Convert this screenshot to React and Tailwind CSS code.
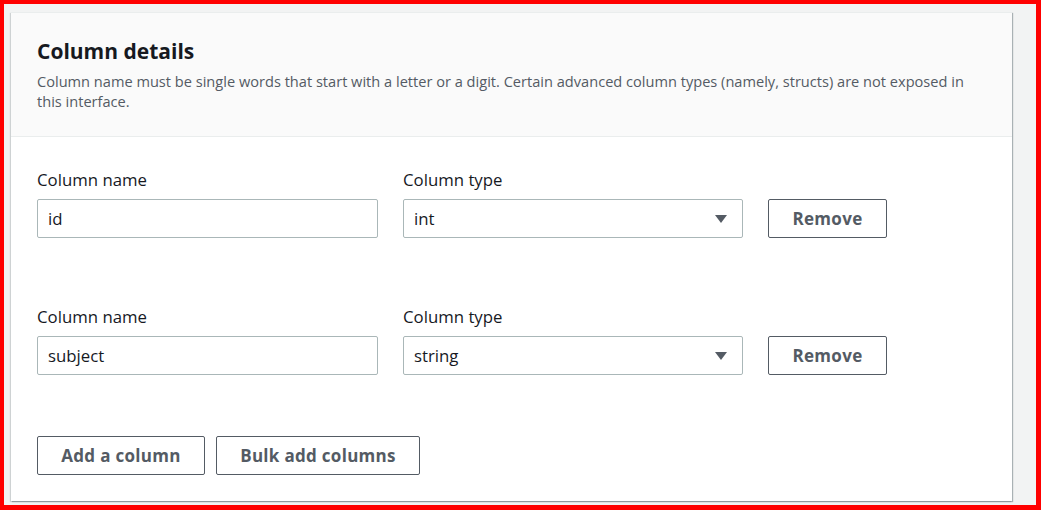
import React from "react";

const rows = [
  { name: "id", type: "int" },
  { name: "subject", type: "string" },
];

const Caret = () => (
  <svg width="14" height="10" viewBox="0 0 14 10" className="shrink-0">
    <path d="M1 1h12L7 9z" fill="#545b64" />
  </svg>
);

const OutlineButton = ({ children, className = "" }) => (
  <button
    className={`h-[39px] rounded-[2px] border border-[#545b64] bg-white text-[17px] tracking-[0.3px] font-bold text-[#545b64] ${className}`}
  >
    {children}
  </button>
);

export default function App() {
  return (
    <div
      className="h-[510px] w-[1041px] border-[#ff0000] border-t-[4px] border-l-[4px] border-r-[5px] border-b-[5px] bg-[#f2f3f3] pl-[7px] pt-[8px]"
      style={{ fontFamily: '"Open Sans", "Noto Sans", sans-serif' }}
    >
      <div className="w-[1001px] h-[489px] border-t border-[#eaeded] bg-white shadow-[1px_1px_1px_0_rgba(0,28,36,0.3),-1px_1px_1px_0_rgba(0,28,36,0.15)]">
        {/* Header */}
        <div className="h-[124px] border-b border-[#eaeded] bg-[#fafafa] px-[26px] pt-[24px]">
          <h2 className="text-[21px] font-bold leading-[28px] text-[#16191f]">Column details</h2>
          <p className="mt-[6px] text-[14.6px] leading-[20px] text-[#545b64] pr-[20px]">
            Column name must be single words that start with a letter or a digit. Certain advanced column types (namely, structs) are not exposed in this interface.
          </p>
        </div>

        {/* Body */}
        <div className="px-[26px] pt-[32px]">
          <div className="flex flex-col gap-[68px]">
            {rows.map((row, i) => (
              <div key={i} className="flex items-end gap-[25px]">
                <div className="w-[341px]">
                  <div className="text-[16.8px] leading-[22px] text-[#16191f]">Column name</div>
                  <div className="mt-[8px] flex h-[39px] items-center rounded-[2px] border border-[#aab7b8] bg-white px-[10px] text-[16.8px] text-[#16191f]">
                    {row.name}
                  </div>
                </div>
                <div className="w-[340px]">
                  <div className="text-[16.8px] leading-[22px] text-[#16191f]">Column type</div>
                  <div className="mt-[8px] flex h-[39px] items-center justify-between rounded-[2px] border border-[#aab7b8] bg-white pl-[10px] pr-[14px] text-[16.8px] text-[#16191f]">
                    <span>{row.type}</span>
                    <Caret />
                  </div>
                </div>
                <OutlineButton className="w-[119px]">Remove</OutlineButton>
              </div>
            ))}
          </div>

          <div className="mt-[61px] flex gap-[11px]">
            <OutlineButton className="w-[168px]">Add a column</OutlineButton>
            <OutlineButton className="w-[204px]">Bulk add columns</OutlineButton>
          </div>
        </div>
      </div>
    </div>
  );
}
